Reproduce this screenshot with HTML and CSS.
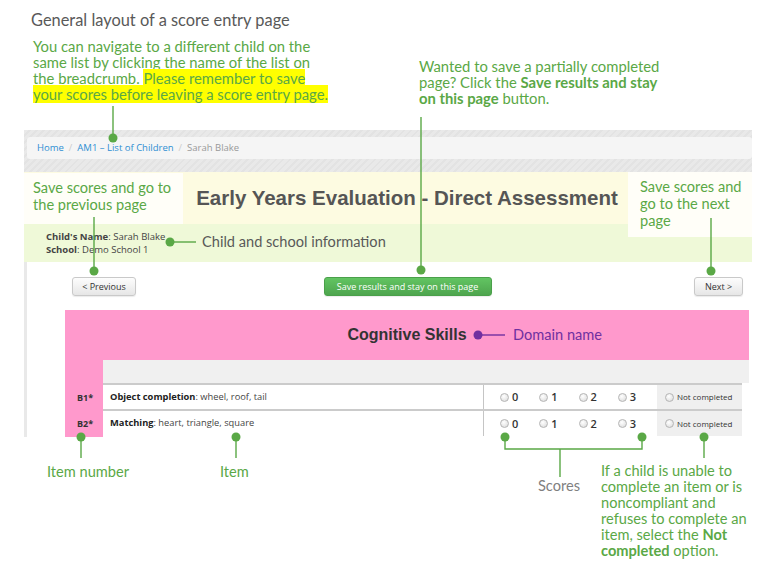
FILE: index.html
```html
<!DOCTYPE html>
<html>
  <head>
    <meta charset="utf-8">
    <title>Score entry page layout</title>
    <link rel="stylesheet" href="styles.css">
  </head>
  <body>
    <div class="page">
      <h1 class="title">General layout of a score entry page</h1>

      <div class="notes">
        <p class="note note-left">You can navigate to a different child on the<br>same list by clicking the name of the list on<br>the breadcrumb. <mark>Please remember to save<br>your scores before leaving a score entry page.</mark></p>
        <p class="note note-right">Wanted to save a partially completed<br>page? Click the <b>Save results and stay<br>on this page</b> button.</p>
      </div>

      <!-- screenshot of the score entry page -->
      <div class="shot">
        <div class="crumb-zone">
          <div class="crumbs">
            <a>Home</a><span class="sep">/</span><a>AM1 – List of Children</a><span class="sep">/</span><span class="here">Sarah Blake</span>
          </div>
        </div>

        <div class="banner">Early Years Evaluation - Direct Assessment</div>

        <div class="info">
          <div><b>Child's Name</b>: Sarah Blake</div>
          <div><b>School</b>: Demo School 1</div>
        </div>

        <div class="main">
          <div class="nav">
            <button class="btn prev">&lt; Previous</button>
            <button class="btn save">Save results and stay on this page</button>
            <button class="btn next">Next &gt;</button>
          </div>

          <div class="domain">
            <div class="domain-head">Cognitive Skills</div>
            <div class="domain-body">
              <div class="num-col">
                <div class="num-spacer"></div>
                <div class="num">B1*</div>
                <div class="num">B2*</div>
              </div>
              <div class="rows">
                <div class="head-row"></div>
                <div class="row">
                  <div class="item"><b>Object completion</b>: wheel, roof, tail</div>
                  <div class="scores">
                    <label class="score"><span class="radio"></span>0</label>
                    <label class="score"><span class="radio"></span>1</label>
                    <label class="score"><span class="radio"></span>2</label>
                    <label class="score"><span class="radio"></span>3</label>
                  </div>
                  <div class="nc"><span class="radio"></span>Not completed</div>
                </div>
                <div class="row">
                  <div class="item"><b>Matching</b>: heart, triangle, square</div>
                  <div class="scores">
                    <label class="score"><span class="radio"></span>0</label>
                    <label class="score"><span class="radio"></span>1</label>
                    <label class="score"><span class="radio"></span>2</label>
                    <label class="score"><span class="radio"></span>3</label>
                  </div>
                  <div class="nc"><span class="radio"></span>Not completed</div>
                </div>
              </div>
            </div>
          </div>
        </div>
      </div>

      <!-- callouts laid over the screenshot -->
      <div class="box box-prev">Save scores and go to<br>the previous page</div>
      <div class="box box-next">Save scores and<br>go to the next<br>page</div>
      <div class="label label-info">Child and school information</div>
      <div class="label label-domain">Domain name</div>
      <div class="label label-num">Item number</div>
      <div class="label label-item">Item</div>
      <div class="label label-scores">Scores</div>
      <p class="label label-nc">If a child is unable to<br>complete an item or is<br>noncompliant and<br>refuses to complete an<br>item, select the <b>Not<br>completed</b> option.</p>

      <svg class="wires" width="763" height="572" viewBox="0 0 763 572">
        <g stroke="#5aa846" stroke-width="1.4" fill="none">
          <path d="M113 106V138"/>
          <path d="M421 117V270"/>
          <path d="M94 217V271"/>
          <path d="M711 218V271"/>
          <path d="M170 242H196"/>
          <path d="M81 437V458"/>
          <path d="M236 437V458"/>
          <path d="M505 437V449H642V437M560 449V477"/>
          <path d="M704 437V458"/>
        </g>
        <g fill="#5aa846">
          <circle cx="113" cy="138" r="4.5"/>
          <circle cx="421" cy="270" r="4.5"/>
          <circle cx="94" cy="271" r="4.5"/>
          <circle cx="711" cy="271" r="4.5"/>
          <circle cx="170" cy="242" r="4.5"/>
          <circle cx="81" cy="437" r="4.5"/>
          <circle cx="236" cy="437" r="4.5"/>
          <circle cx="505" cy="437" r="4.5"/>
          <circle cx="642" cy="437" r="4.5"/>
          <circle cx="704" cy="437" r="4.5"/>
        </g>
        <path d="M478 335H505" stroke="#7030a0" stroke-width="1.4"/>
        <circle cx="478" cy="335" r="4.5" fill="#7030a0"/>
      </svg>
    </div>
  </body>
</html>
```

FILE: styles.css
```css
body {
  margin: 0;
  background: #fff;
  font-family: Lato, "Open Sans", sans-serif;
}
.page {
  position: relative;
  width: 763px;
  height: 572px;
  overflow: hidden;
}
.title {
  margin: 0;
  padding: 10px 0 0 31px;
  font-size: 16.4px;
  line-height: 20px;
  font-weight: normal;
  color: #595959;
}
.notes {
  display: flex;
  height: 92px;
  margin-top: 8px;
  padding-left: 33px;
}
.note {
  margin: 0;
  font-size: 14.8px;
  line-height: 16px;
  white-space: nowrap;
  color: #5aa846;
}
.note mark {
  background: #ffff00;
  color: #5aa846;
}
.note-left {
  width: 386px;
}
.note-right {
  margin-top: 20px;
}

/* screenshot */
.shot {
  width: 728px;
  margin-left: 24px;
  font-family: "Open Sans", sans-serif;
  color: #333;
}
.crumb-zone {
  padding: 7px 0 13px 3px;
  background: repeating-linear-gradient(135deg, #e9e9e9 0 3px, #e3e3e3 3px 5px);
}
.crumbs {
  height: 22px;
  padding-left: 10px;
  border-radius: 3px;
  background: #f5f5f5;
  font-size: 9.5px;
  line-height: 22px;
}
.crumbs a {
  color: #2f8fd3;
}
.crumbs .sep {
  color: #ccc;
  margin: 0 5px;
}
.crumbs .here {
  color: #999;
}
.banner {
  height: 52px;
  padding-left: 38px;
  background: #fdfbe1;
  text-align: center;
  font-family: "Liberation Sans", Arial, sans-serif;
  font-weight: bold;
  font-size: 20.5px;
  line-height: 52px;
  color: #555;
}
.info {
  height: 38px;
  box-sizing: border-box;
  padding: 6px 0 0 22px;
  background: #eff9d8;
  font-size: 9.5px;
  line-height: 13px;
  color: #444;
}
.main {
  border-left: 3px solid #e9e9e9;
  padding-top: 15px;
}
.nav {
  display: grid;
  grid-template-columns: 1fr auto 1fr;
  align-items: center;
  padding: 0 9px 0 45px;
  margin-bottom: 14px;
}
.btn {
  height: 19px;
  padding: 0;
  border: 1px solid #c9c9c9;
  border-radius: 3px;
  font-family: "Open Sans", sans-serif;
  font-size: 9px;
  line-height: 17px;
  color: #333;
  background: linear-gradient(#fdfdfd, #e6e6e6);
  box-shadow: 0 1px 1px rgba(0, 0, 0, 0.08);
}
.btn.prev {
  justify-self: start;
  width: 64px;
}
.btn.save {
  width: 168px;
  border-color: #4aa04a;
  color: #fff;
  background: linear-gradient(#62c462, #4ea54e);
}
.btn.next {
  justify-self: end;
  width: 49px;
}
.domain {
  margin: 0 3px 0 38px;
  background: #ff99cc;
}
.domain-head {
  height: 50px;
  text-align: center;
  font-family: "Liberation Sans", Arial, sans-serif;
  font-weight: bold;
  font-size: 16px;
  line-height: 50px;
  color: #333;
}
.domain-body {
  display: flex;
}
.num-col {
  width: 38px;
  font-size: 9px;
  font-weight: bold;
  color: #333;
}
.num-spacer {
  height: 25px;
}
.num {
  height: 26px;
  line-height: 26px;
  padding-left: 12px;
}
.rows {
  flex: 1;
  background: #fff;
}
.head-row {
  height: 23px;
  background: #f0f0f0;
}
.row {
  display: grid;
  grid-template-columns: 380px 174px 85px;
  width: 639px;
  height: 24px;
  border-top: 2px solid #cbcbcb;
  font-size: 9.3px;
  line-height: 24px;
}
.row:last-child {
  height: 25px;
}
.item {
  padding-left: 7px;
  color: #444;
}
.item b {
  color: #222;
}
.scores {
  display: flex;
  padding-left: 16px;
  border-left: 1px solid #c5c5c5;
}
.score {
  display: flex;
  align-items: center;
  width: 42px;
  font-size: 11px;
  font-weight: 600;
  color: #333;
}
.radio {
  display: inline-block;
  width: 7px;
  height: 7px;
  margin-right: 3px;
  border: 1px solid #b5b5b5;
  border-radius: 50%;
  background: radial-gradient(circle at 40% 35%, #fff, #d8d8d8);
}
.nc {
  display: flex;
  align-items: center;
  padding-left: 8px;
  background: #efefef;
  font-size: 8px;
  color: #333;
}

/* callouts */
.box {
  position: absolute;
  box-sizing: border-box;
  background: #fffef8;
  font-size: 14.6px;
  line-height: 17px;
  color: #5aa846;
}
.box-prev {
  left: 24px;
  top: 173px;
  width: 159px;
  height: 51px;
  padding: 6px 0 0 9px;
}
.box-next {
  left: 628px;
  top: 172px;
  width: 124px;
  height: 65px;
  padding: 6px 0 0 12px;
}
.label {
  position: absolute;
  margin: 0;
  font-size: 14.6px;
  line-height: 16px;
  white-space: nowrap;
}
.label-info {
  left: 202px;
  top: 234px;
  color: #595959;
}
.label-domain {
  left: 513px;
  top: 327px;
  color: #7030a0;
}
.label-num {
  left: 47px;
  top: 464px;
  color: #5aa846;
}
.label-item {
  left: 220px;
  top: 464px;
  color: #5aa846;
}
.label-scores {
  left: 538px;
  top: 478px;
  color: #7f7f7f;
}
.label-nc {
  left: 601px;
  top: 463px;
  color: #5aa846;
}
.wires {
  position: absolute;
  left: 0;
  top: 0;
  pointer-events: none;
}
```
